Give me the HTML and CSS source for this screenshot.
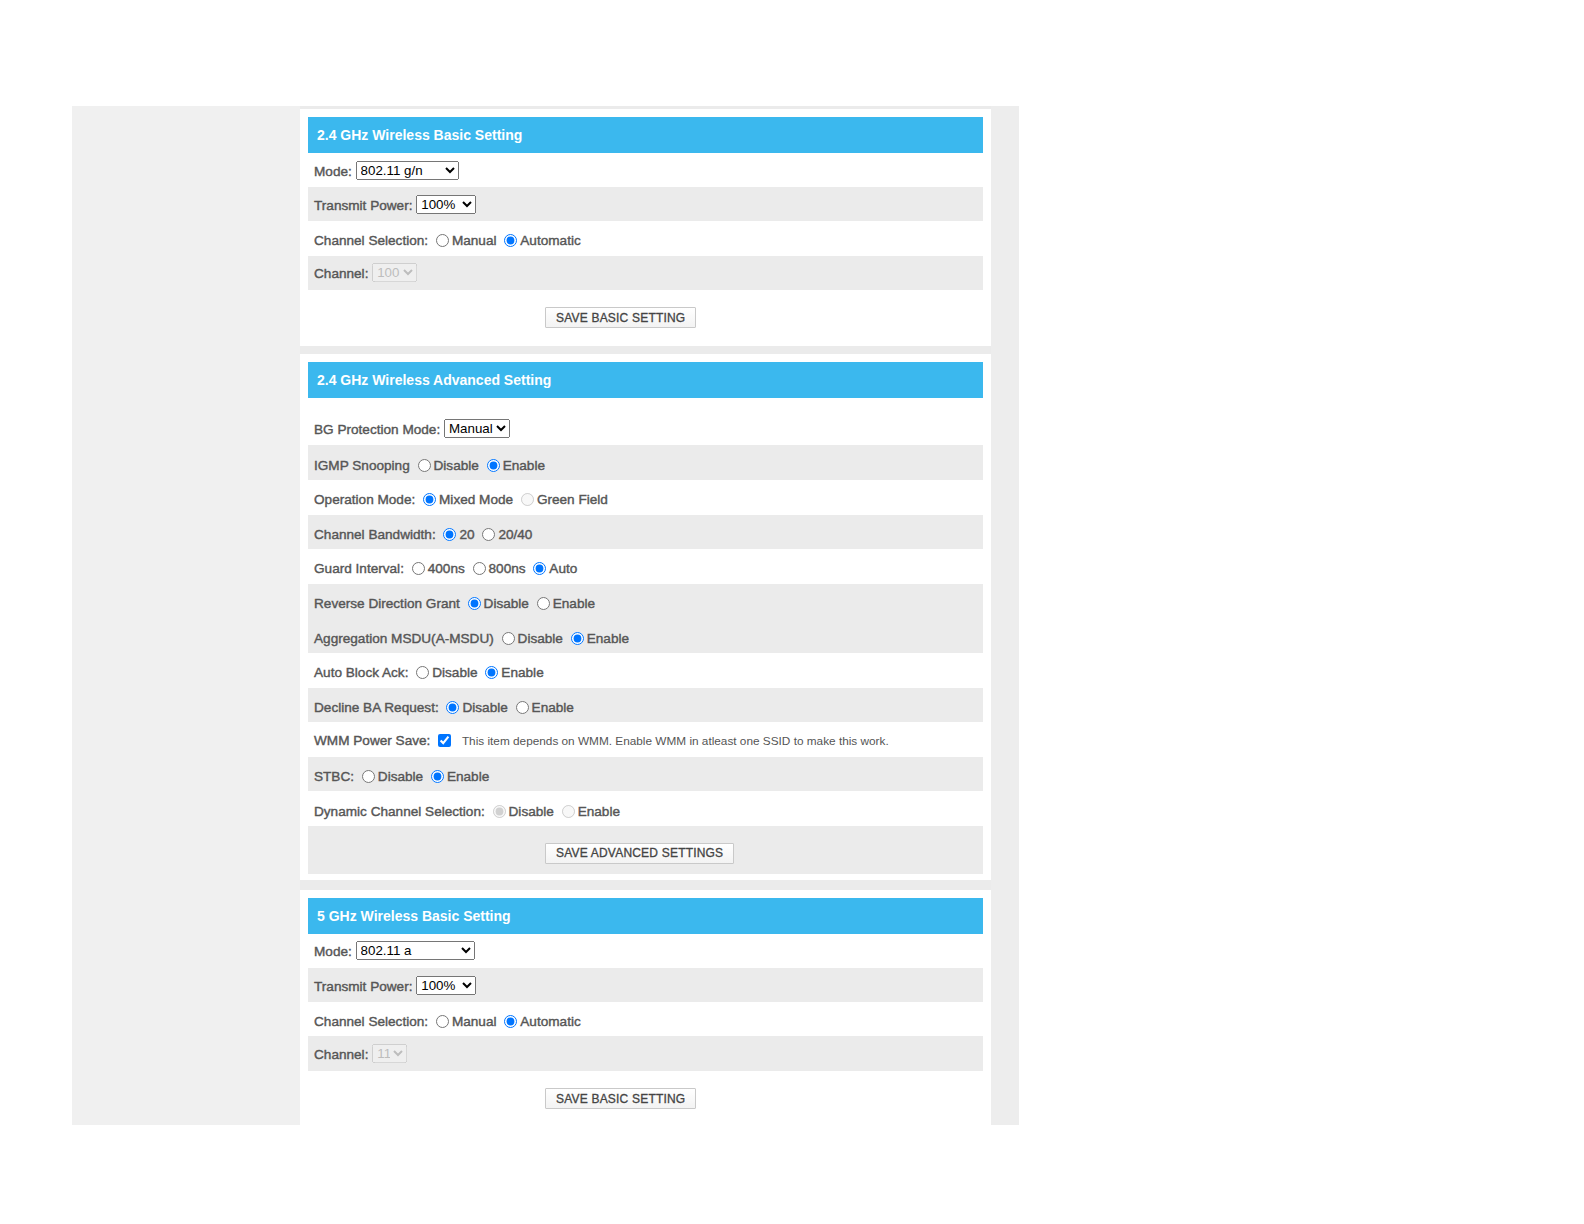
FILE: index.html
```html
<!DOCTYPE html>
<html>
<head>
<meta charset="utf-8">
<title>Wireless Settings</title>
<link rel="stylesheet" href="styles.css">
</head>
<body>
<div class="page">
  <div class="sidebar"></div>
  <div class="main">
    <section class="card card-basic">
      <h2 class="card-title">2.4 GHz Wireless Basic Setting</h2>
      <div class="row">
        <div class="ctl"><span class="lbl">Mode:</span> <select class="sel sel-mode24"><option>802.11 g/n</option></select></div>
      </div>
      <div class="row grey">
        <div class="ctl"><span class="lbl">Transmit Power:</span> <select class="sel sel-power"><option>100%</option></select></div>
      </div>
      <div class="row r">
        <div class="ctl"><span class="lbl">Channel Selection:</span> <input type="radio" name="cs24">Manual <input type="radio" name="cs24" checked>Automatic</div>
      </div>
      <div class="row grey">
        <div class="ctl"><span class="lbl">Channel:</span> <select class="sel sel-ch24" disabled><option>100</option></select></div>
      </div>
      <div class="btn-area">
        <button class="btn">SAVE BASIC SETTING</button>
      </div>
    </section>

    <section class="card card-adv">
      <h2 class="card-title">2.4 GHz Wireless Advanced Setting</h2>
      <div class="spacer"></div>
      <div class="row">
        <div class="ctl"><span class="lbl">BG Protection Mode:</span> <select class="sel sel-bg"><option>Manual</option></select></div>
      </div>
      <div class="row r grey">
        <div class="ctl"><span class="lbl">IGMP Snooping</span> <input type="radio" name="igmp">Disable <input type="radio" name="igmp" checked>Enable</div>
      </div>
      <div class="row r">
        <div class="ctl"><span class="lbl">Operation Mode:</span> <input type="radio" name="op" checked>Mixed Mode <input type="radio" name="op" disabled>Green Field</div>
      </div>
      <div class="row r grey">
        <div class="ctl"><span class="lbl">Channel Bandwidth:</span> <input type="radio" name="bw" checked>20 <input type="radio" name="bw">20/40</div>
      </div>
      <div class="row r">
        <div class="ctl"><span class="lbl">Guard Interval:</span> <input type="radio" name="gi">400ns <input type="radio" name="gi">800ns <input type="radio" name="gi" checked>Auto</div>
      </div>
      <div class="row r grey">
        <div class="ctl"><span class="lbl">Reverse Direction Grant</span> <input type="radio" name="rdg" checked>Disable <input type="radio" name="rdg">Enable</div>
      </div>
      <div class="row r grey">
        <div class="ctl"><span class="lbl">Aggregation MSDU(A-MSDU)</span> <input type="radio" name="amsdu">Disable <input type="radio" name="amsdu" checked>Enable</div>
      </div>
      <div class="row r">
        <div class="ctl"><span class="lbl">Auto Block Ack:</span> <input type="radio" name="aba">Disable <input type="radio" name="aba" checked>Enable</div>
      </div>
      <div class="row r grey">
        <div class="ctl"><span class="lbl">Decline BA Request:</span> <input type="radio" name="dba" checked>Disable <input type="radio" name="dba">Enable</div>
      </div>
      <div class="row r">
        <div class="ctl"><span class="lbl">WMM Power Save:</span> <input type="checkbox" checked> <span class="note">This item depends on WMM. Enable WMM in atleast one SSID to make this work.</span></div>
      </div>
      <div class="row r grey">
        <div class="ctl"><span class="lbl">STBC:</span> <input type="radio" name="stbc">Disable <input type="radio" name="stbc" checked>Enable</div>
      </div>
      <div class="row r">
        <div class="ctl"><span class="lbl">Dynamic Channel Selection:</span> <input type="radio" name="dcs" checked disabled>Disable <input type="radio" name="dcs" disabled>Enable</div>
      </div>
      <div class="btn-area grey adv">
        <button class="btn">SAVE ADVANCED SETTINGS</button>
      </div>
    </section>

    <section class="card card-basic last">
      <h2 class="card-title">5 GHz Wireless Basic Setting</h2>
      <div class="row">
        <div class="ctl"><span class="lbl">Mode:</span> <select class="sel sel-mode5"><option>802.11 a</option></select></div>
      </div>
      <div class="row grey">
        <div class="ctl"><span class="lbl">Transmit Power:</span> <select class="sel sel-power"><option>100%</option></select></div>
      </div>
      <div class="row r">
        <div class="ctl"><span class="lbl">Channel Selection:</span> <input type="radio" name="cs5">Manual <input type="radio" name="cs5" checked>Automatic</div>
      </div>
      <div class="row grey">
        <div class="ctl"><span class="lbl">Channel:</span> <select class="sel sel-ch5" disabled><option>11</option></select></div>
      </div>
      <div class="btn-area">
        <button class="btn">SAVE BASIC SETTING</button>
      </div>
    </section>
  </div>
  <div class="rstrip"></div>
</div>
</body>
</html>
```

FILE: styles.css
```css
html, body {
  margin: 0;
  padding: 0;
  background: #ffffff;
}

body {
  font-family: "Liberation Sans", Arial, sans-serif;
}

.page {
  display: flex;
  margin: 106px 0 0 72px;
  width: 947px;
  height: 1019px;
  overflow: hidden;
  background: #f0f0f0;
}

.sidebar {
  width: 228px;
  flex: none;
  background: #f0f0f0;
}

.main {
  width: 691px;
  flex: none;
  padding-top: 3px;
  background: #ebebeb;
}

.rstrip {
  width: 28px;
  flex: none;
  background: #ededed;
}

.card {
  background: #ffffff;
  padding: 8px 8px 0 8px;
  margin-bottom: 8px;
}

.card-adv {
  padding-bottom: 6px;
  margin-bottom: 10px;
}

.card.last {
  padding-bottom: 30px;
}

.card-title {
  margin: 0;
  height: 36px;
  display: flex;
  align-items: center;
  padding: 0 9px;
  background: #3bb8ee;
  color: #ffffff;
  font-size: 14px;
  font-weight: bold;
}

.spacer {
  height: 13px;
}

.row {
  box-sizing: border-box;
  height: 34.6px;
  display: flex;
  align-items: center;
  padding-left: 6px;
}

.row.r {
  padding-top: 3px;
}

.card-basic .row {
  height: 34.2px;
}

.grey {
  background: #ebebeb;
}

.ctl {
  font-size: 13.6px;
  color: #565656;
  -webkit-text-stroke: 0.4px #565656;
  white-space: nowrap;
}

.ctl input[type="radio"] {
  vertical-align: -2px;
  margin-left: 4px;
  -webkit-text-stroke: 0;
}

.ctl input[type="checkbox"] {
  vertical-align: -2px;
}

.note {
  font-size: 11.8px;
  margin-left: 4px;
  -webkit-text-stroke: 0;
  color: #555555;
}

.sel {
  font-family: "Liberation Sans", Arial, sans-serif;
  font-size: 13.33px;
  height: 19px;
  color: #000;
  -webkit-text-stroke: 0;
  vertical-align: 1px;
}

.sel:disabled {
  color: #aaaaaa;
}

.sel-mode24 { width: 103px; }
.sel-mode5 { width: 119px; }
.sel-power { width: 60px; }
.sel-ch24 { width: 45px; }
.sel-ch5 { width: 35px; }
.sel-bg { width: 66px; }

.btn-area {
  height: 56px;
  display: flex;
  align-items: center;
  padding-left: 237px;
  box-sizing: border-box;
}

.btn-area.adv {
  height: 48px;
  padding-top: 7px;
}

.card.last .btn-area {
  height: 56px;
}

.btn {
  height: 21px;
  padding: 0 10px;
  border: 1px solid #c9c9c9;
  border-radius: 1px;
  background: linear-gradient(#ffffff, #f3f3f3);
  color: #444444;
  font-family: "Liberation Sans", Arial, sans-serif;
  font-size: 12px;
  -webkit-text-stroke: 0.3px #444444;
  letter-spacing: 0.2px;
}
```
